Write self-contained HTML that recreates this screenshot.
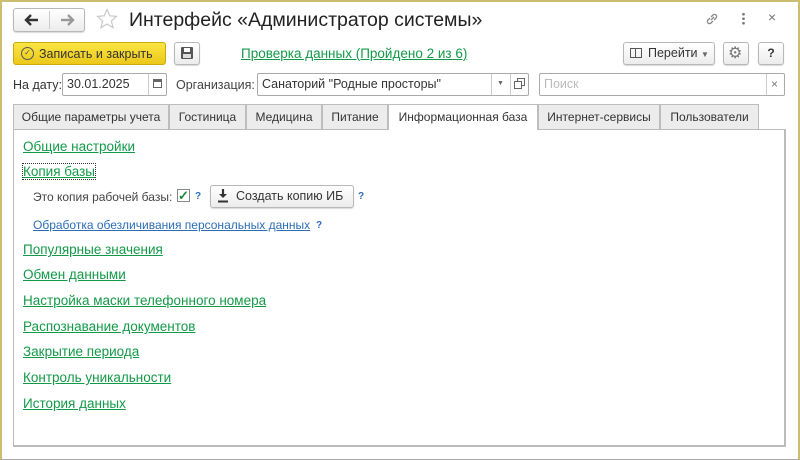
<!DOCTYPE html>
<html><head><meta charset="utf-8"><style>
*{box-sizing:border-box;margin:0;padding:0}
body{width:800px;height:460px;overflow:hidden;background:#fff;font-family:"Liberation Sans",Arial,sans-serif;font-size:12px;color:#333;position:relative}
.frame{position:absolute;left:0;top:0;width:800px;height:460px;border:2px solid #cbbd72;border-bottom:1px solid #aaa}
.abs{position:absolute}
.btn{position:absolute;border:1px solid #b8b8b8;border-radius:3px;background:linear-gradient(#fff,#ececec);box-shadow:0 1px 1px rgba(0,0,0,.15)}
.inp{position:absolute;border:1px solid #aaa;background:#fff;border-radius:2px;height:23px;line-height:21px;padding-left:4px;font-size:12.5px;color:#333}
a,.lnk{color:#139a48;text-decoration:underline;font-size:13.5px}
.tab{position:absolute;top:104px;height:25px;border:1px solid #bdbdbd;background:#ececec;line-height:24px;text-align:center;font-size:12px;color:#333;border-bottom:none}
.q{color:#2d6db5;font-size:10px;font-weight:bold}
</style></head><body>
<div class="frame"></div>
<div class="btn" style="left:13px;top:8px;width:72px;height:24px"></div>
<div class="abs" style="left:49px;top:11px;width:1px;height:18px;background:#ccc"></div>
<svg class="abs" style="left:24px;top:13px" width="16" height="14" viewBox="0 0 16 14"><path d="M14 7H3M7 2L2 7l5 5" fill="none" stroke="#333" stroke-width="2.4"/></svg>
<svg class="abs" style="left:59px;top:13px" width="16" height="14" viewBox="0 0 16 14"><path d="M2 7h11M9 2l5 5-5 5" fill="none" stroke="#999" stroke-width="2.4"/></svg>
<svg class="abs" style="left:96px;top:8px" width="22" height="22" viewBox="0 0 22 22"><path d="M11 1.5l2.8 6.3 6.7.6-5.1 4.5 1.6 6.7L11 16.1 5 19.6l1.6-6.7L1.5 8.4l6.7-.6z" fill="none" stroke="#c8c8c8" stroke-width="1.2"/></svg>
<div class="abs" style="left:129px;top:9px;font-size:19.5px;color:#222">Интерфейс «Администратор системы»</div>
<svg class="abs" style="left:704px;top:11px" width="16" height="16" viewBox="0 0 16 16" fill="none" stroke="#888" stroke-width="1.3"><path d="M7 9l3-3M6 7L4 9a2.1 2.1 0 003 3l2-2M10 9l2-2a2.1 2.1 0 00-3-3L7 6"/></svg>
<div class="abs" style="left:742px;top:12px;width:3px;height:13px;background:radial-gradient(circle,#777 1.2px,transparent 1.5px) 0 0/3px 4.5px"></div>
<div class="abs" style="left:768px;top:9px;font-size:14px;color:#777">×</div>

<div class="abs" style="left:13px;top:42px;width:153px;height:23px;background:linear-gradient(#fbe543,#ecc81a);border:1px solid #c9aa10;border-radius:3px"></div>
<div class="abs" style="left:21px;top:47px;width:13px;height:13px;border:1.3px solid #555;border-radius:50%;font-size:8px;line-height:10px;text-align:center;color:#555">✓</div>
<div class="abs" style="left:39px;top:47px;font-size:12.5px;color:#333">Записать и закрыть</div>
<div class="btn" style="left:174px;top:42px;width:26px;height:23px"></div>
<div class="abs" style="left:181px;top:47px;width:12px;height:12px;background:#555;border-radius:1px"><div style="position:absolute;left:3px;top:1px;width:6px;height:4px;background:#fff"></div><div style="position:absolute;left:2px;top:7px;width:8px;height:4px;background:#ddd"></div></div>
<a class="abs" style="left:241px;top:46px">Проверка данных (Пройдено 2 из 6)</a>
<div class="btn" style="left:623px;top:42px;width:92px;height:23px"></div>
<div class="abs" style="left:630px;top:48px;width:12px;height:10px;border:1px solid #555"><div style="position:absolute;left:4px;top:0;width:1px;height:8px;background:#555"></div></div>
<div class="abs" style="left:648px;top:46px;font-size:12.5px">Перейти <span style="font-size:8px;color:#666">▼</span></div>
<div class="btn" style="left:723px;top:42px;width:26px;height:23px"></div>
<div class="abs" style="left:728px;top:43px;font-size:16px;color:#777">⚙</div>
<div class="btn" style="left:758px;top:42px;width:26px;height:23px;text-align:center;line-height:21px;font-weight:bold;font-size:12px">?</div>

<div class="abs" style="left:13px;top:78px;font-size:12.5px">На дату:</div>
<div class="inp" style="left:62px;top:73px;width:105px">30.01.2025</div>
<div class="abs" style="left:148px;top:74px;width:1px;height:21px;background:#ccc"></div>
<div class="abs" style="left:153px;top:79px;width:9px;height:9px;border:1px solid #666;border-top:3px solid #666"></div>
<div class="abs" style="left:176px;top:78px;font-size:12.5px;color:#444">Организация:</div>
<div class="inp" style="left:257px;top:73px;width:272px">Санаторий "Родные просторы"</div>
<div class="abs" style="left:491px;top:74px;width:1px;height:21px;background:#ccc"></div>
<div class="abs" style="left:510px;top:74px;width:1px;height:21px;background:#ccc"></div>
<div class="abs" style="left:497px;top:80px;font-size:7px;color:#666">▼</div>
<div class="abs" style="left:517px;top:78px;width:8px;height:8px;border:1px solid #666"></div>
<div class="abs" style="left:514px;top:81px;width:8px;height:8px;border:1px solid #666;background:#fff"></div>
<div class="inp" style="left:539px;top:73px;width:246px;color:#bbb">Поиск</div>
<div class="abs" style="left:766px;top:74px;width:1px;height:21px;background:#ccc"></div>
<div class="abs" style="left:771px;top:77px;font-size:12px;color:#777">×</div>

<div class="abs" style="left:13px;top:129px;width:773px;height:318px;border:1px solid #bbb;border-right:2px solid #bbb;border-bottom:2px solid #bbb"></div>
<div class="tab" style="left:13px;width:156px">Общие параметры учета</div>
<div class="tab" style="left:169px;width:77px">Гостиница</div>
<div class="tab" style="left:246px;width:76px">Медицина</div>
<div class="tab" style="left:322px;width:66px">Питание</div>
<div class="tab" style="left:388px;width:150px;background:#fff;height:26px;top:104px;z-index:2">Информационная база</div>
<div class="tab" style="left:538px;width:122px">Интернет-сервисы</div>
<div class="tab" style="left:660px;width:99px">Пользователи</div>

<a class="abs" style="left:23px;top:139px">Общие настройки</a>
<a class="abs" style="left:23px;top:164px;outline:1px dotted #333">Копия базы</a>
<div class="abs" style="left:33px;top:190px;font-size:12px;color:#444">Это копия рабочей базы:</div>
<div class="abs" style="left:177px;top:189px;width:13px;height:13px;border:1px solid #888;color:#1a8a3c;font-size:13px;line-height:11px;font-weight:bold">✓</div>
<div class="abs q" style="left:195px;top:191px">?</div>
<div class="btn" style="left:210px;top:185px;width:144px;height:23px"></div>
<svg class="abs" style="left:217px;top:189px" width="12" height="14" viewBox="0 0 12 14"><path d="M6 0v8" stroke="#333" stroke-width="2.2"/><path d="M2 5l4 4 4-4z" fill="#333"/><path d="M1 12.5h10" stroke="#333" stroke-width="2"/></svg>
<div class="abs" style="left:236px;top:189px;font-size:12.5px">Создать копию ИБ</div>
<div class="abs q" style="left:358px;top:191px">?</div>
<a class="abs" style="left:33px;top:218px;color:#2d6db5;font-size:12px">Обработка обезличивания персональных данных</a>
<div class="abs q" style="left:316px;top:220px">?</div>
<a class="abs" style="left:23px;top:242px">Популярные значения</a>
<a class="abs" style="left:23px;top:267px">Обмен данными</a>
<a class="abs" style="left:23px;top:293px">Настройка маски телефонного номера</a>
<a class="abs" style="left:23px;top:319px">Распознавание документов</a>
<a class="abs" style="left:23px;top:344px">Закрытие периода</a>
<a class="abs" style="left:23px;top:370px">Контроль уникальности</a>
<a class="abs" style="left:23px;top:396px">История данных</a>
</body></html>
